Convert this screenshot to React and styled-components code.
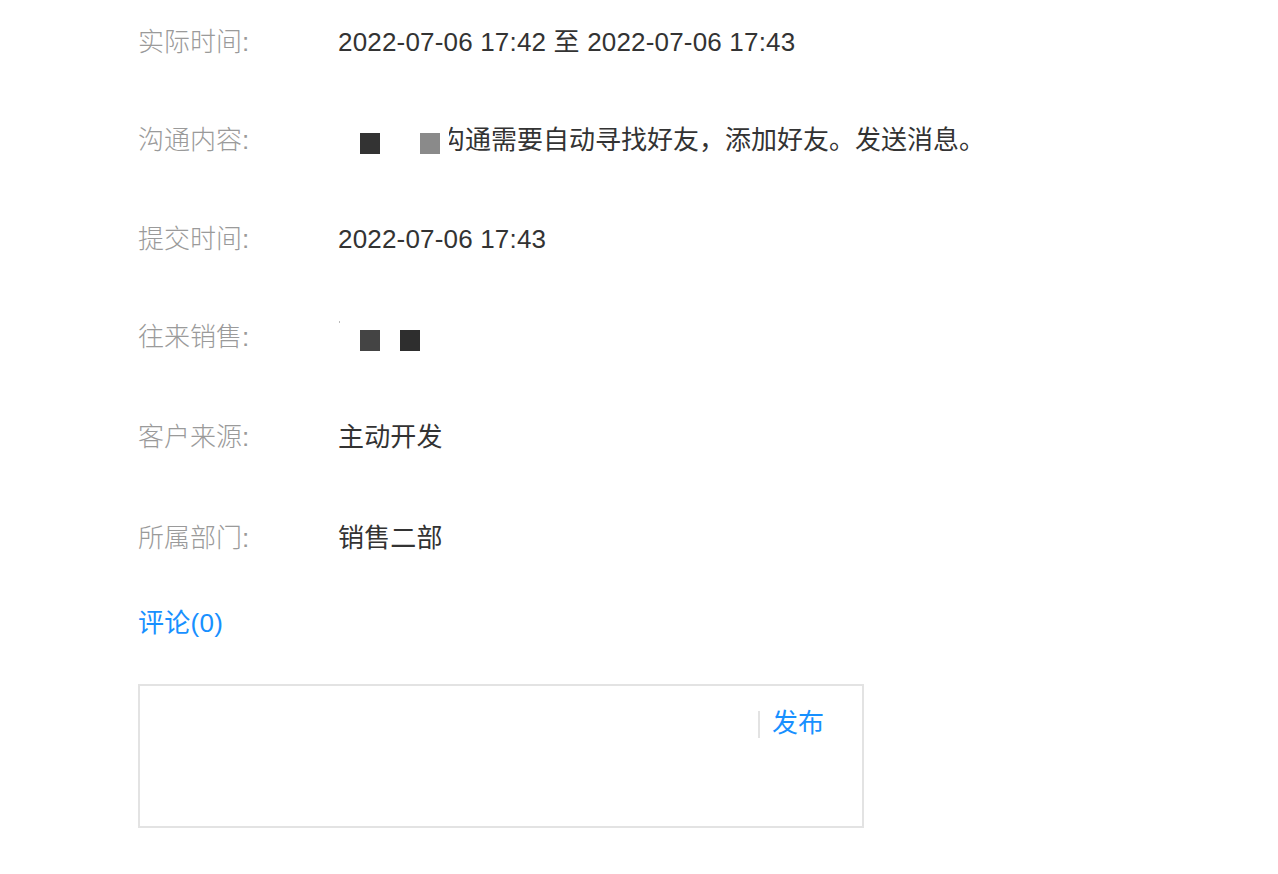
import React from "react";
import styled, { createGlobalStyle } from "styled-components";

const Global = createGlobalStyle`
  html, body { margin: 0; padding: 0; background: #fff; }
  body { font-family: "Liberation Sans", "Noto Sans CJK SC", sans-serif; }
`;

const Page = styled.div`
  padding: 24px 0 0 138px;
  width: 726px;
`;

const Row = styled.div`
  display: flex;
  align-items: flex-start;
  height: ${(p) => p.$h || 99}px;
  font-size: 26px;
  line-height: 36px;
`;

const Label = styled.div`
  width: 200px;
  flex: none;
  color: #9a9a9a;
  font-weight: 300;
`;

const Value = styled.div`
  color: #333;
  white-space: nowrap;
  display: flex;
  align-items: flex-start;
  letter-spacing: 0.18px;
`;

const Redact = styled.span`
  position: relative;
  z-index: 1;
  display: inline-block;
  width: ${(p) => p.$w}px;
  height: 36px;
  background: #fff;
  flex: none;
`;

const Square = styled.span`
  position: absolute;
  top: 11px;
  left: ${(p) => p.$x}px;
  width: 20px;
  height: 21px;
  background: ${(p) => p.$c};
`;

const Tick = styled.span`
  position: absolute;
  top: 2px;
  left: 1px;
  width: 1px;
  height: 2px;
  background: #bbb;
`;

const Under = styled.span`
  margin-left: -10px;
  letter-spacing: 0;
`;

const CommentTitle = styled.div`
  margin-top: -13px;
  color: #1890ff;
  font-size: 26px;
  line-height: 36px;
  letter-spacing: 0.3px;
`;

const Box = styled.div`
  margin-top: 43px;
  box-sizing: border-box;
  width: 726px;
  height: 144px;
  border: 2px solid #e3e3e3;
  display: flex;
  justify-content: flex-end;
  align-items: flex-start;
  padding: 21px 38px 0 0;
`;

const Divider = styled.span`
  width: 2px;
  height: 27px;
  margin-top: 4px;
  background: #e3e3e3;
  margin-right: 12px;
`;

const Publish = styled.span`
  color: #1890ff;
  font-size: 26px;
  line-height: 32px;
  cursor: pointer;
`;

export default function App() {
  return (
    <>
      <Global />
      <Page>
        <Row $h={98}>
          <Label>实际时间:</Label>
          <Value>2022-07-06 17:42 至 2022-07-06 17:43</Value>
        </Row>
        <Row>
          <Label>沟通内容:</Label>
          <Value>
            <Redact $w={111}>
              <Square $x={22} $c="#333" />
              <Square $x={82} $c="#8a8a8a" />
            </Redact>
            <Under>沟通需要自动寻找好友，添加好友。发送消息。</Under>
          </Value>
        </Row>
        <Row $h={98}>
          <Label>提交时间:</Label>
          <Value>2022-07-06 17:43</Value>
        </Row>
        <Row $h={100}>
          <Label>往来销售:</Label>
          <Value>
            <Redact $w={90}>
              <Tick />
              <Square $x={22} $c="#444" />
              <Square $x={62} $c="#2e2e2e" />
            </Redact>
          </Value>
        </Row>
        <Row $h={101}>
          <Label>客户来源:</Label>
          <Value>主动开发</Value>
        </Row>
        <Row $h={98}>
          <Label>所属部门:</Label>
          <Value>销售二部</Value>
        </Row>
        <CommentTitle>评论(0)</CommentTitle>
        <Box>
          <Divider />
          <Publish>发布</Publish>
        </Box>
      </Page>
    </>
  );
}
